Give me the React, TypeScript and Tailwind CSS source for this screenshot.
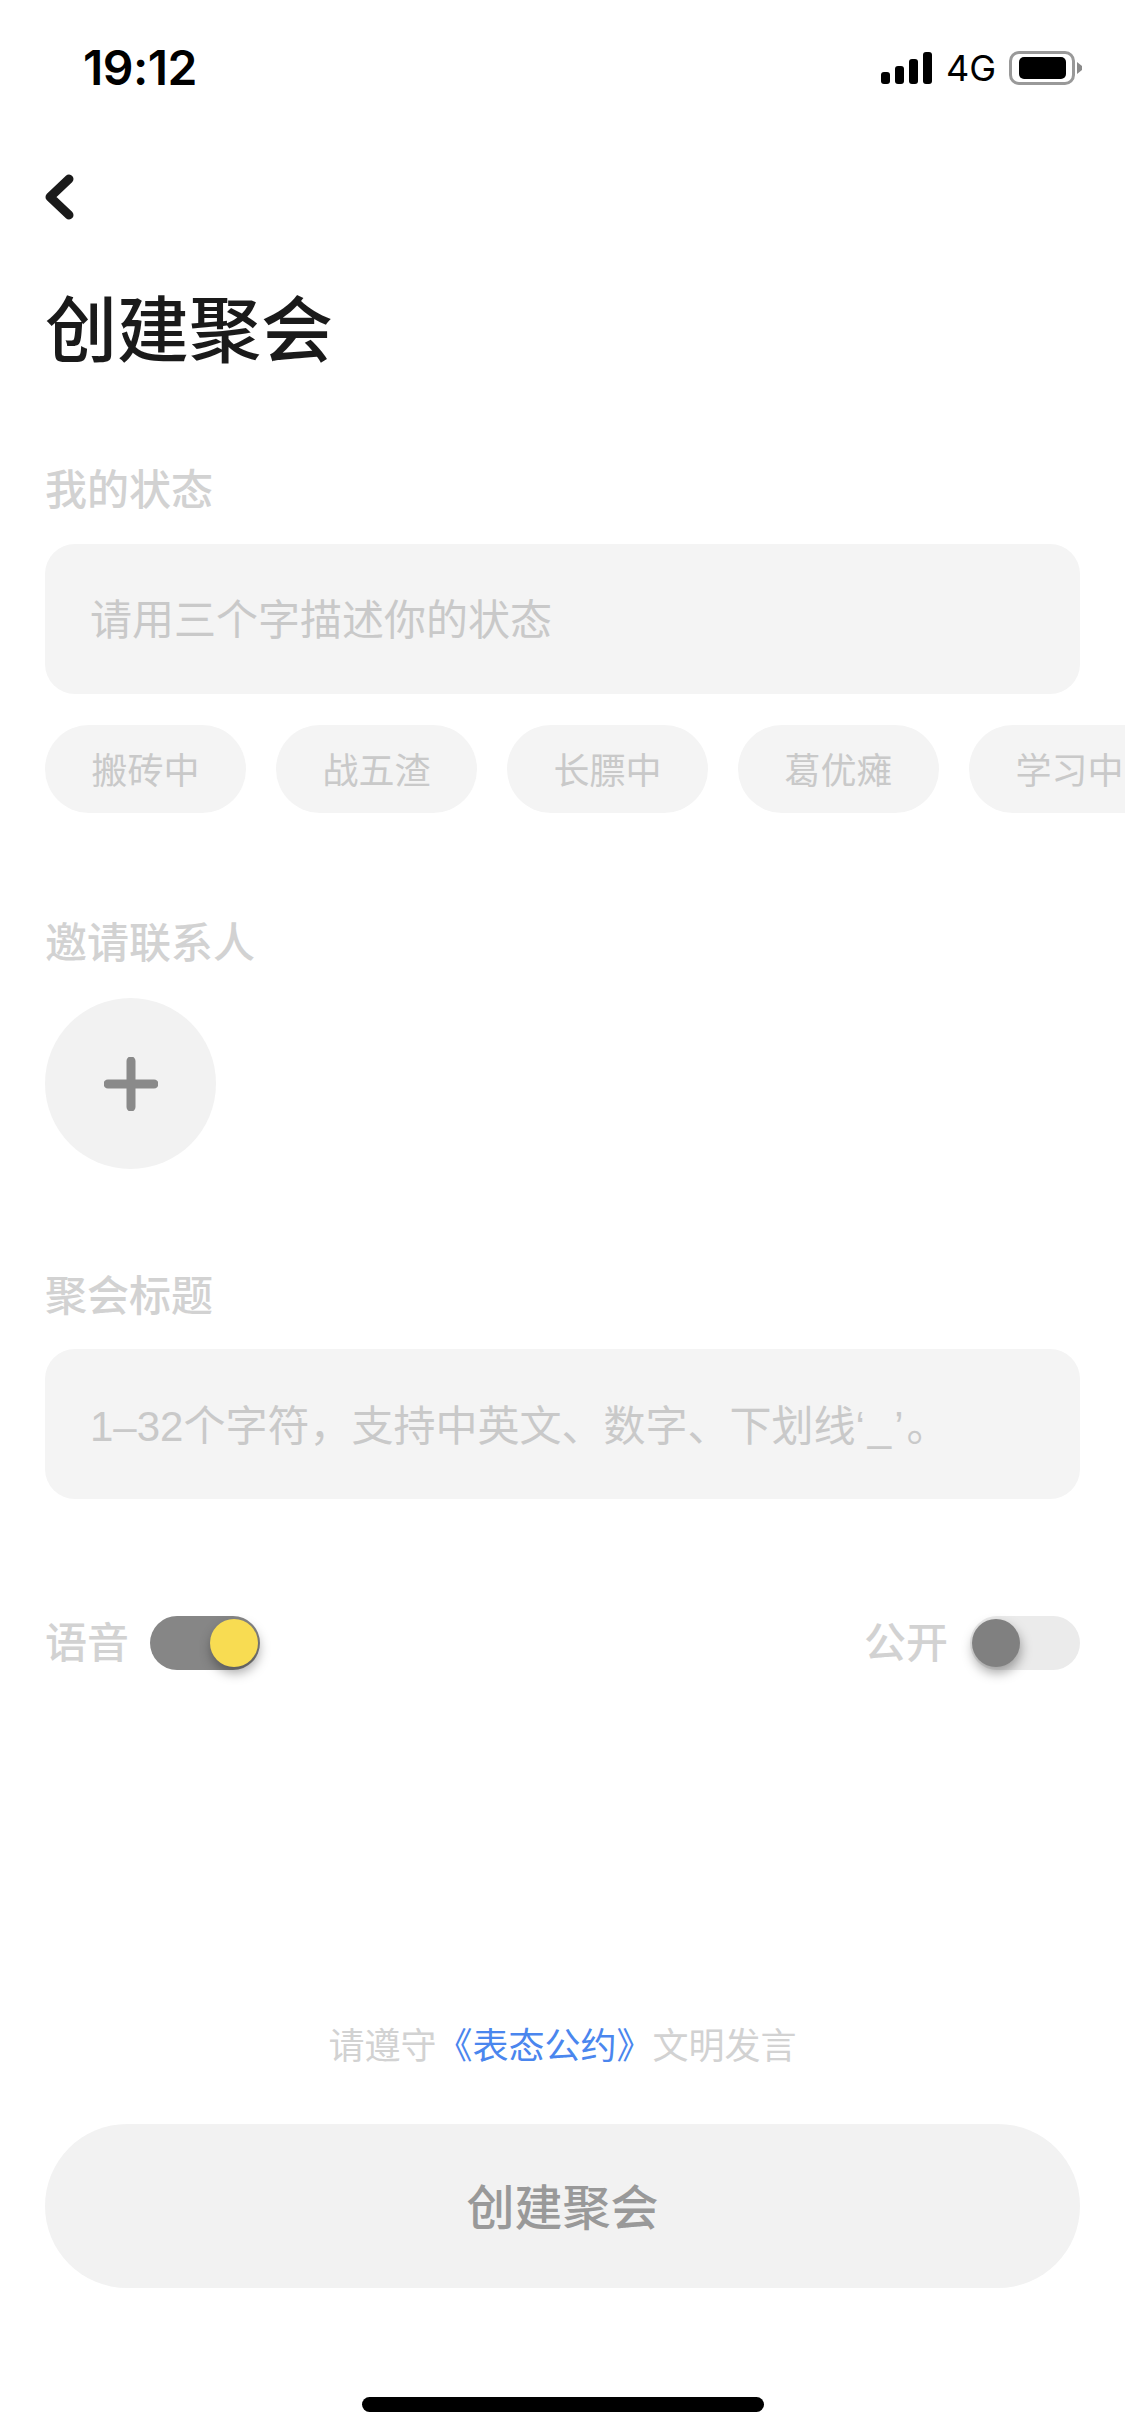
const tags = ["搬砖中", "战五渣", "长膘中", "葛优瘫", "学习中"];

const SectionLabel = ({ text, className }: { text: string; className: string }) => (
  <div className={`px-[45px] h-[60px] leading-[54px] text-[42px] font-medium text-[#d2d2d2] ${className}`}>
    {text}
  </div>
);

const InputBox = ({ children, className }: { children: React.ReactNode; className: string }) => (
  <div className={`mx-[45px] h-[150px] rounded-[30px] bg-[#f4f4f4] flex items-center pl-[45px] pb-[6px] text-[42px] text-[#c9c9c9] whitespace-nowrap ${className}`}>
    {children}
  </div>
);

const App = () => {
  return (
    <div
      className="w-[1125px] min-h-[2436px] bg-white flex flex-col overflow-hidden"
      style={{ fontFamily: '"Noto Sans CJK SC", "Noto Sans", sans-serif' }}
    >
      {/* status bar */}
      <div className="h-[136px] flex items-center justify-between pl-[83px] pr-[43px] shrink-0">
        <span className="text-[48px] font-semibold tracking-[-0.5px] text-black font-['Inter']">19:12</span>
        <div className="flex items-center">
          <svg width="51" height="32" viewBox="0 0 51 32" className="mr-[14px]">
            <rect x="0" y="20" width="9" height="12" rx="3" fill="#000" />
            <rect x="14" y="14" width="9" height="18" rx="3" fill="#000" />
            <rect x="28" y="7" width="9" height="25" rx="3" fill="#000" />
            <rect x="42" y="0" width="9" height="32" rx="3" fill="#000" />
          </svg>
          <span className="text-[36px] leading-none text-black font-['Inter'] mr-[13px]">4G</span>
          <div className="w-[66px] h-[34px] border-[3px] border-[#999999] rounded-[10px] flex items-center justify-center">
            <div className="w-[47px] h-[22px] bg-black rounded-[5px]" />
          </div>
          <svg width="5" height="12" viewBox="0 0 5 12" className="ml-[2px]">
            <path d="M0 0 L5 4 V8 L0 12 Z" fill="#8a8a8a" />
          </svg>
        </div>
      </div>

      {/* back */}
      <div className="mt-[38px] pl-[45px] h-[46px] shrink-0">
        <svg width="30" height="46" viewBox="0 0 30 46" fill="none">
          <path d="M24 5 L5 23 L24 41" stroke="#1a1a1a" strokeWidth="9" strokeLinecap="round" strokeLinejoin="round" />
        </svg>
      </div>

      <h1 className="mt-[68px] px-[45px] h-[80px] leading-[74px] text-[72px] font-medium text-[#1a1a1a]">创建聚会</h1>

      <SectionLabel text="我的状态" className="mt-[92px]" />
      <InputBox className="mt-[24px]">请用三个字描述你的状态</InputBox>

      <div className="mt-[31px] pl-[45px] flex gap-[30px] overflow-hidden">
        {tags.map((tag) => (
          <div
            key={tag}
            className="w-[201px] h-[88px] shrink-0 rounded-[44px] bg-[#f4f4f4] flex items-center justify-center pb-[3px] text-[36px] text-[#c9c9c9]"
          >
            {tag}
          </div>
        ))}
      </div>

      <SectionLabel text="邀请联系人" className="mt-[100px]" />
      <div className="mt-[25px] ml-[45px] w-[171px] h-[171px] rounded-full bg-[#f2f2f2] flex items-center justify-center">
        <svg width="54" height="54" viewBox="0 0 54 54" fill="none">
          <path d="M27 4 V50 M4 27 H50" stroke="#8a8a8a" strokeWidth="9" strokeLinecap="round" />
        </svg>
      </div>

      <SectionLabel text="聚会标题" className="mt-[97px]" />
      <InputBox className="mt-[23px]">
        <span className="pt-[10px]" style={{ fontFamily: '"Liberation Sans", "Noto Sans CJK SC", sans-serif' }}>
          1–32个字符，支持中英文、数字、下划线<span className="tracking-[3px]">‘_’</span>。
        </span>
      </InputBox>

      {/* switches */}
      <div className="mt-[117px] px-[45px] flex justify-between items-center h-[54px]">
        <div className="flex items-center gap-[21px]">
          <span className="text-[42px] leading-[48px] h-[54px] font-medium text-[#d2d2d2]">语音</span>
          <div className="w-[110px] h-[54px] rounded-full bg-[#868686] flex items-center justify-end pr-[2px]">
            <div className="w-[48px] h-[48px] rounded-full bg-[#f8dc52] shadow-[1px_6px_12px_rgba(0,0,0,0.35)]" />
          </div>
        </div>
        <div className="flex items-center gap-[22px]">
          <span className="text-[42px] leading-[48px] h-[54px] font-medium text-[#d2d2d2]">公开</span>
          <div className="w-[110px] h-[54px] rounded-full bg-[#ebebeb] flex items-center pl-[2px]">
            <div className="w-[48px] h-[48px] rounded-full bg-[#808080] shadow-[1px_6px_12px_rgba(0,0,0,0.35)]" />
          </div>
        </div>
      </div>

      <div className="flex-1" />

      <div className="h-[60px] flex items-center justify-center pb-[6px] text-[36px] text-[#d2d2d2] whitespace-nowrap">
        <span>请遵守</span>
        <span className="text-[#4a86ee]">《表态公约》</span>
        <span>文明发言</span>
      </div>

      <div className="mt-[48px] mx-[45px] h-[164px] rounded-[82px] bg-[#f2f2f2] flex items-center justify-center pb-[4px] text-[48px] font-medium text-[#999999]">
        创建聚会
      </div>

      <div className="mt-[109px] mb-[24px] mx-auto w-[402px] h-[15px] rounded-full bg-black" />
    </div>
  );
};

export default App;
